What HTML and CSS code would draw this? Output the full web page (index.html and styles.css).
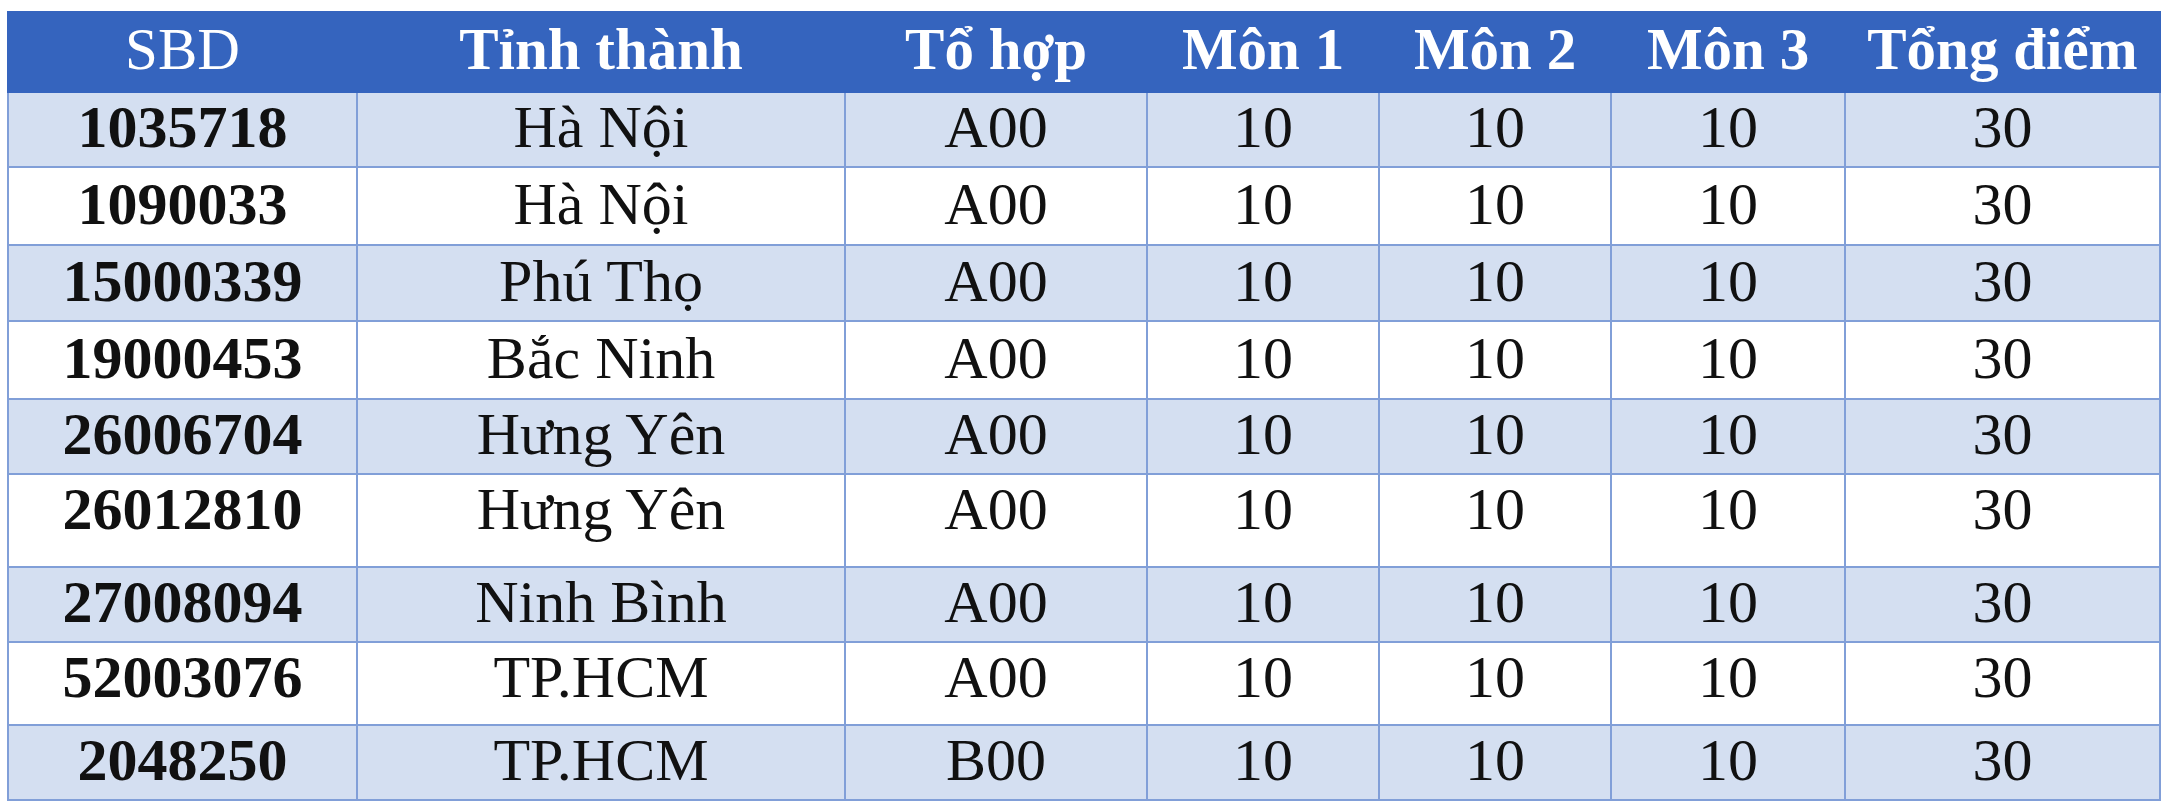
FILE: index.html
```html
<!DOCTYPE html>
<html lang="vi">
<head>
<meta charset="utf-8">
<title>Bảng điểm</title>
<link rel="stylesheet" href="styles.css">
</head>
<body>
<div class="wrap">
<table class="scores">
  <colgroup>
    <col class="c-sbd"><col class="c-tinh"><col class="c-tohop"><col class="c-mon"><col class="c-mon"><col class="c-mon3"><col class="c-tong">
  </colgroup>
  <thead>
    <tr class="head">
      <th class="regular">SBD</th><th>Tỉnh thành</th><th>Tổ hợp</th><th>Môn 1</th><th>Môn 2</th><th>Môn 3</th><th>Tổng điểm</th>
    </tr>
  </thead>
  <tbody>
    <tr class="band r1"><td class="sbd">1035718</td><td>Hà Nội</td><td>A00</td><td>10</td><td>10</td><td>10</td><td>30</td></tr>
    <tr class="r2"><td class="sbd">1090033</td><td>Hà Nội</td><td>A00</td><td>10</td><td>10</td><td>10</td><td>30</td></tr>
    <tr class="band r3"><td class="sbd">15000339</td><td>Phú Thọ</td><td>A00</td><td>10</td><td>10</td><td>10</td><td>30</td></tr>
    <tr class="r4"><td class="sbd">19000453</td><td>Bắc Ninh</td><td>A00</td><td>10</td><td>10</td><td>10</td><td>30</td></tr>
    <tr class="band r5"><td class="sbd">26006704</td><td>Hưng Yên</td><td>A00</td><td>10</td><td>10</td><td>10</td><td>30</td></tr>
    <tr class="r6"><td class="sbd">26012810</td><td>Hưng Yên</td><td>A00</td><td>10</td><td>10</td><td>10</td><td>30</td></tr>
    <tr class="band r7"><td class="sbd">27008094</td><td>Ninh Bình</td><td>A00</td><td>10</td><td>10</td><td>10</td><td>30</td></tr>
    <tr class="r8"><td class="sbd">52003076</td><td>TP.HCM</td><td>A00</td><td>10</td><td>10</td><td>10</td><td>30</td></tr>
    <tr class="band r9"><td class="sbd">2048250</td><td>TP.HCM</td><td>B00</td><td>10</td><td>10</td><td>10</td><td>30</td></tr>
  </tbody>
</table>
</div>
</body>
</html>
```

FILE: styles.css
```css
html, body {
  margin: 0;
  padding: 0;
  background: #ffffff;
}

.wrap {
  padding: 11px 0 0 7px;
}

.scores {
  border-collapse: collapse;
  table-layout: fixed;
  width: 2154px;
  font-family: "Liberation Serif", "Times New Roman", serif;
  color: #111111;
}

.c-sbd { width: 349px; }
.c-tinh { width: 488px; }
.c-tohop { width: 302px; }
.c-mon { width: 232px; }
.c-mon3 { width: 234px; }
.c-tong { width: 315px; }

.scores th {
  background: #3564be;
  color: #ffffff;
  font-size: 59px;
  font-weight: bold;
  border: 2px solid #3564be;
  padding: 0 0 4px 0;
  text-align: center;
  vertical-align: middle;
  white-space: nowrap;
  line-height: 1.15;
}

.scores th.regular {
  font-weight: normal;
}

.head { height: 80px; }

.scores td {
  font-size: 60px;
  border: 2px solid #819fd8;
  padding: 0 0 4px 0;
  text-align: center;
  vertical-align: middle;
  white-space: nowrap;
  line-height: 1.15;
  background: #ffffff;
}

.scores .band td {
  background: #d4dff1;
}

.scores td.sbd {
  font-weight: bold;
}

.r1 { height: 75px; }
.r2 { height: 78px; }
.r3 { height: 76px; }
.r4 { height: 78px; }
.r5 { height: 72px; }
.r6 { height: 92px; }
.r7 { height: 75px; }
.r8 { height: 80px; }
.r9 { height: 74px; }

.scores .r6 td { padding-bottom: 22px; }
.scores .r8 td { padding-bottom: 12px; }
```
